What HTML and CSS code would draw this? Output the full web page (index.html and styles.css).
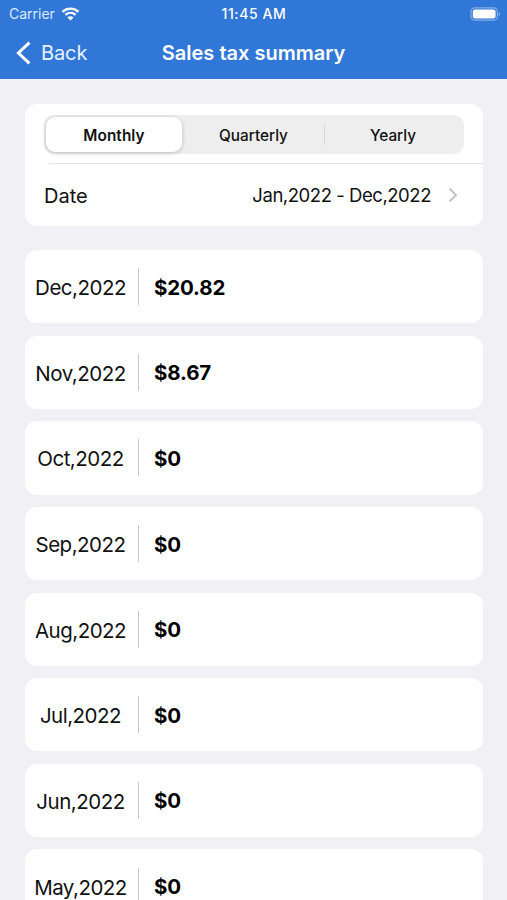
FILE: index.html
```html
<!doctype html>

<html lang="en">
<head>
  <meta charset="utf-8">
  <title>Sales tax summary</title>
  <meta name="viewport" content="width=device-width, initial-scale=1" />
  <link rel="stylesheet" href="styles.css">
</head>

<body>
  <header class="header">
    <div class="status-bar">
      <div class="carrier">
        <span>Carrier</span>
        <svg class="wifi" viewBox="0 0 18 14" width="19" height="14">
          <path d="M1 4.800C5.600.6 12.400.6 17 4.800M3.900 7.900c3-2.700 7.200-2.700 10.200 0" fill="none" stroke="#fff" stroke-width="2.300"/>
          <path d="M9 13.500 5.900 10.400c1.800-1.600 4.400-1.600 6.200 0z" fill="#fff"/>
        </svg>
      </div>
      <div class="clock">11:45 AM</div>
      <svg class="battery" viewBox="0 0 31 14" width="31" height="14">
        <rect x="1" y=".8" width="26.400" height="12.400" rx="3.800" fill="none" stroke="#86b0e9" stroke-width="1.200"/>
        <rect x="2.800" y="2.500" width="22.800" height="9" rx="2.200" fill="#fff"/>
        <path d="M28.800 5v4c1.900-.8 1.900-3.200 0-4z" fill="#86b0e9"/>
      </svg>
    </div>
    <nav class="nav-bar">
      <a class="back">
        <svg viewBox="0 0 16 24" width="16" height="24">
          <path d="M13.400 1.600 2.400 12l11 10.400" fill="none" stroke="#fff" stroke-width="3"/>
        </svg>
        <span>Back</span>
      </a>
      <h1>Sales tax summary</h1>
    </nav>
  </header>

  <main>
    <section class="card filter">
      <div class="segments">
        <div class="segment active">Monthly</div>
        <div class="segment">Quarterly</div>
        <div class="segment last">Yearly</div>
      </div>
      <div class="date-row">
        <span class="label">Date</span>
        <span class="range">Jan,2022 - Dec,2022</span>
        <svg viewBox="0 0 10 16" width="10" height="16">
          <path d="M1.500 1.500 8 8l-6.500 6.500" fill="none" stroke="#c4c4c6" stroke-width="2"/>
        </svg>
      </div>
    </section>

    <div class="list">
      <div class="card row"><span class="month">Dec,2022</span><span class="amount">$20.82</span></div>
      <div class="card row"><span class="month">Nov,2022</span><span class="amount">$8.67</span></div>
      <div class="card row"><span class="month">Oct,2022</span><span class="amount">$0</span></div>
      <div class="card row"><span class="month">Sep,2022</span><span class="amount">$0</span></div>
      <div class="card row"><span class="month">Aug,2022</span><span class="amount">$0</span></div>
      <div class="card row"><span class="month">Jul,2022</span><span class="amount">$0</span></div>
      <div class="card row"><span class="month">Jun,2022</span><span class="amount">$0</span></div>
      <div class="card row"><span class="month">May,2022</span><span class="amount">$0</span></div>
    </div>
  </main>
</body>
</html>
```

FILE: styles.css
```css
* {
  box-sizing: border-box;
}

body {
  margin: 0;
  height: 900px;
  overflow: hidden;
  background: #f0f0f5;
  color: #111;
  font-family: Inter, "Liberation Sans", sans-serif;
}

svg {
  display: block;
}

.header {
  height: 79px;
  background: #3077d7;
  color: #fff;
}

.status-bar {
  display: grid;
  grid-template-columns: 1fr auto 1fr;
  align-items: center;
  height: 27px;
  padding: 0 6px 0 9px;
  font-size: 14px;
}

.carrier {
  display: flex;
  align-items: center;
  gap: 6px;
  color: #dce9fb;
}

.clock {
  margin-right: 2px;
  font-size: 14px;
  font-weight: 500;
  letter-spacing: 0.6px;
}

.battery {
  justify-self: end;
}

.nav-bar {
  display: grid;
  grid-template-columns: 1fr auto 1fr;
  align-items: center;
  height: 51px;
  padding: 0 16px;
}

.back {
  display: flex;
  align-items: center;
  gap: 9px;
  font-size: 20px;
  letter-spacing: -0.1px;
  color: #e8f1ff;
}

.nav-bar h1 {
  margin: 0;
  font-size: 20px;
  font-weight: 600;
}

main {
  padding: 24.5px 24px 0 25px;
}

.card {
  background: #fff;
  border-radius: 12px;
}

.filter {
  height: 122px;
  padding-top: 11px;
}

.segments {
  display: grid;
  grid-template-columns: 137px 141px 1fr;
  height: 39px;
  margin: 0 19px;
  padding: 2px;
  border-radius: 10px;
  background: #eee;
}

.segment {
  display: flex;
  align-items: center;
  justify-content: center;
  padding-top: 2px;
  font-size: 15.3px;
  font-weight: 500;
}

.active {
  margin-right: 1px;
  border-radius: 9px;
  background: #fff;
  box-shadow: 0 1px 4px rgba(0, 0, 0, 0.22);
  font-weight: 600;
  letter-spacing: 0.1px;
}

.last {
  background: linear-gradient(#d8d8da, #d8d8da) left center / 1px 21px no-repeat;
}

.date-row {
  display: flex;
  align-items: center;
  height: 63px;
  margin: 9.5px 0 0 24px;
  padding-right: 25px;
  border-top: 1px solid #e6e6e8;
}

.label {
  margin-left: -5px;
  padding-top: 1px;
  font-size: 20px;
}

.range {
  margin: 0 17px 0 auto;
  font-size: 18.5px;
  letter-spacing: -0.45px;
}

.list {
  display: grid;
  gap: 12.4px;
  margin-top: 24.5px;
}

.row {
  display: flex;
  align-items: center;
  height: 73.25px;
}

.month {
  width: 114px;
  padding-top: 2px;
  padding-right: 2px;
  border-right: 1px solid #c8c8c8;
  line-height: 35px;
  font-size: 20.5px;
  letter-spacing: -0.5px;
  text-align: center;
}

.amount {
  margin-left: 15px;
  padding-top: 1px;
  color: #000;
  font-size: 20.5px;
  font-weight: 700;
  letter-spacing: -0.15px;
}
```
